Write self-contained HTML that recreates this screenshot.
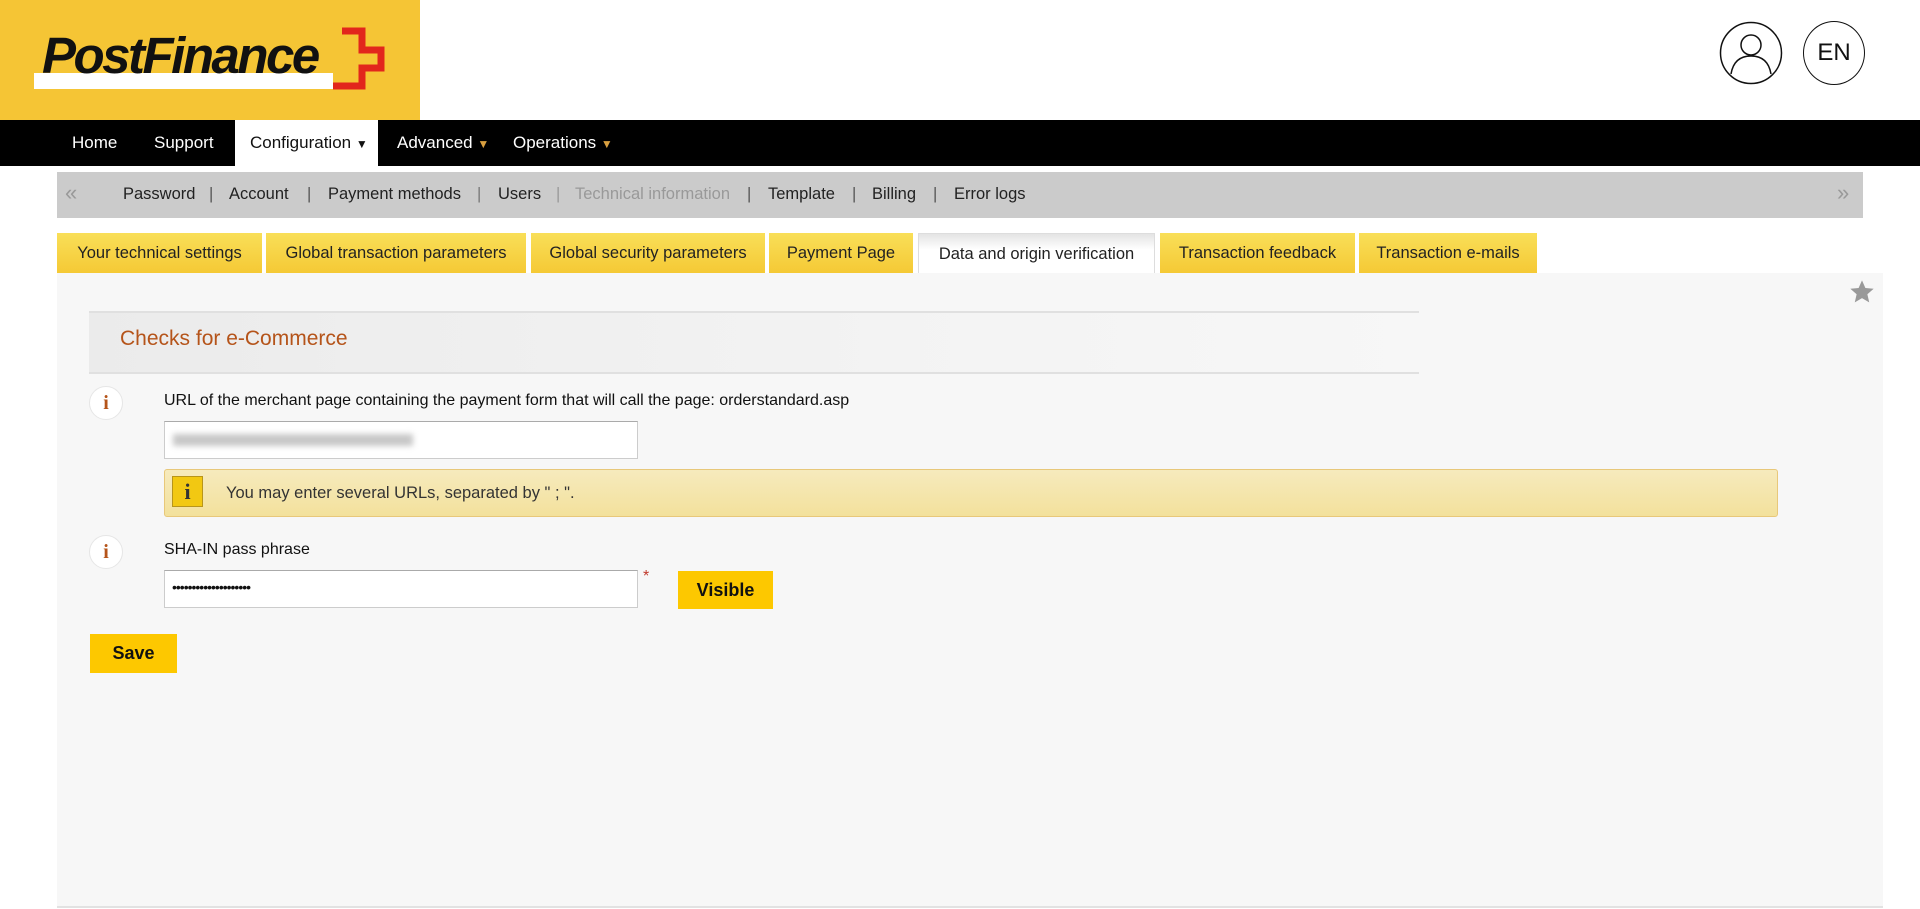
<!DOCTYPE html>
<html><head><meta charset="utf-8"><style>
*{margin:0;padding:0;box-sizing:border-box}
body{width:1920px;height:909px;background:#fff;font-family:"Liberation Sans",sans-serif;position:relative;overflow:hidden;color:#111}
.a{position:absolute}
.logo{left:0;top:0;width:420px;height:120px;background:#f5c535}
.nav{left:0;top:120px;width:1920px;height:46px;background:#000}
.nav span{position:absolute;top:13px;color:#fff;font-size:17px}
.sub{left:57px;top:172px;width:1806px;height:46px;background:#cbcbcb}
.sub span{position:absolute;top:13px;font-size:16.5px;color:#222}
.tab{position:absolute;top:233px;height:40px;background:linear-gradient(#f9df58,#f5c935);font-size:16.5px;color:#222;text-align:center;line-height:40px}
.panel{left:57px;top:273px;width:1826px;height:635px;background:#f7f7f7;border-bottom:2px solid #e2e2e2}
.info{position:absolute;width:34px;height:34px;border-radius:50%;background:#fff;border:1px solid #e6e6e6;color:#b5541a;font-weight:bold;font-family:"Liberation Serif",serif;font-size:20px;text-align:center;line-height:32px}
.inp{position:absolute;background:#fff;border:1px solid #ccc;border-top-color:#aaa;height:38px;width:474px}
.btn{position:absolute;background:#fdc800;font-weight:bold;font-size:18px;text-align:center;color:#111}
</style></head><body>
<div class="a logo">
<div class="a" style="left:34px;top:73px;width:299px;height:16px;background:#fff"></div>
<div class="a" style="left:42px;top:28px;font-size:51px;font-weight:bold;font-style:italic;letter-spacing:-2.5px;color:#111;line-height:56px">PostFinance</div>
<svg class="a" style="left:0;top:0" width="420" height="120" viewBox="0 0 420 120"><path d="M342 31H362V50H381V68H362V86H333" fill="none" stroke="#e2261c" stroke-width="7"/></svg>
</div>
<svg class="a" style="left:1719px;top:21px" width="64" height="64" viewBox="0 0 64 64"><circle cx="32" cy="32" r="30.5" fill="none" stroke="#111" stroke-width="1.5"/><circle cx="32" cy="24" r="10" fill="none" stroke="#111" stroke-width="1.5"/><path d="M12 53c2-12 9-18 20-18s18 6 20 18" fill="none" stroke="#111" stroke-width="1.5"/></svg>
<div class="a" style="left:1803px;top:21px;width:62px;height:64px;border:1.5px solid #111;border-radius:50%;text-align:center;line-height:62px;font-size:24px">EN</div>
<div class="a nav">
<span style="left:72px">Home</span><span style="left:154px">Support</span>
<div class="a" style="left:235px;top:0;width:143px;height:46px;background:#fff"></div>
<span style="left:250px;color:#111">Configuration <b style="font-size:12px">▼</b></span>
<span style="left:397px">Advanced <b style="font-size:12px;color:#d9a040">▼</b></span>
<span style="left:513px">Operations <b style="font-size:12px;color:#d9a040">▼</b></span>
</div>
<div class="a sub">
<span style="left:8px;color:#999;font-size:22px;top:8px">«</span>
<span style="left:66px">Password</span><span style="left:152px;color:#555">|</span>
<span style="left:172px">Account</span><span style="left:250px;color:#555">|</span>
<span style="left:271px">Payment methods</span><span style="left:420px;color:#777">|</span>
<span style="left:441px">Users</span><span style="left:499px;color:#999">|</span>
<span style="left:518px;color:#999">Technical information</span><span style="left:690px;color:#555">|</span>
<span style="left:711px">Template</span><span style="left:795px;color:#555">|</span>
<span style="left:815px">Billing</span><span style="left:876px;color:#555">|</span>
<span style="left:897px">Error logs</span>
<span style="left:1780px;color:#999;font-size:22px;top:8px">»</span>
</div>
<div class="tab" style="left:57px;width:205px">Your technical settings</div>
<div class="tab" style="left:266px;width:260px">Global transaction parameters</div>
<div class="tab" style="left:531px;width:234px">Global security parameters</div>
<div class="tab" style="left:769px;width:144px">Payment Page</div>
<div class="tab" style="left:918px;width:237px;background:linear-gradient(#e4e4e4,#fff 40%);border:1px solid #ddd;border-bottom:none">Data and origin verification</div>
<div class="tab" style="left:1160px;width:195px">Transaction feedback</div>
<div class="tab" style="left:1359px;width:178px">Transaction e-mails</div>
<div class="a panel">
<div class="a" style="left:32px;top:38px;width:1330px;height:63px;background:linear-gradient(90deg,#ebebeb,#f3f3f3 60%,#f7f7f7);border-top:2px solid #e0e0e0;border-bottom:2px solid #e0e0e0"></div>
<div class="a" style="left:63px;top:54px;font-size:21px;color:#b5541a">Checks for e-Commerce</div>
<svg class="a" style="left:1791px;top:5px" width="28" height="28" viewBox="0 0 24 24"><path d="M12 2l2.9 6.6 7.1.6-5.4 4.7 1.6 7-6.2-3.7-6.2 3.7 1.6-7L2 9.2l7.1-.6z" fill="#999"/></svg>
<div class="info" style="left:32px;top:113px">i</div>
<div class="a" style="left:107px;top:119px;font-size:16px">URL of the merchant page containing the payment form that will call the page: orderstandard.asp</div>
<div class="inp" style="left:107px;top:148px"><div class="a" style="left:8px;top:12px;width:240px;height:12px;background:#c8c8c8;filter:blur(3px)"></div></div>
<div class="a" style="left:107px;top:196px;width:1614px;height:48px;background:linear-gradient(#f6eabd,#f3e19c);border:1px solid #e8c87a;border-radius:3px"></div>
<div class="a" style="left:115px;top:203px;width:31px;height:31px;background:#f2c812;border:1px solid #b8951a;text-align:center;font-family:'Liberation Serif',serif;font-weight:bold;font-size:22px;line-height:30px;color:#333">i</div>
<div class="a" style="left:169px;top:211px;font-size:16.5px;color:#333">You may enter several URLs, separated by " ; ".</div>
<div class="info" style="left:32px;top:262px">i</div>
<div class="a" style="left:107px;top:268px;font-size:16px">SHA-IN pass phrase</div>
<div class="inp" style="left:107px;top:297px"><div class="a" style="left:7px;top:8px;font-size:14px;letter-spacing:-1px">••••••••••••••••••••</div></div>
<div class="a" style="left:586px;top:295px;color:#c0392b;font-size:16px">*</div>
<div class="btn" style="left:621px;top:298px;width:95px;height:38px;line-height:38px">Visible</div>
<div class="btn" style="left:33px;top:361px;width:87px;height:39px;line-height:39px">Save</div>
</div>
</body></html>
